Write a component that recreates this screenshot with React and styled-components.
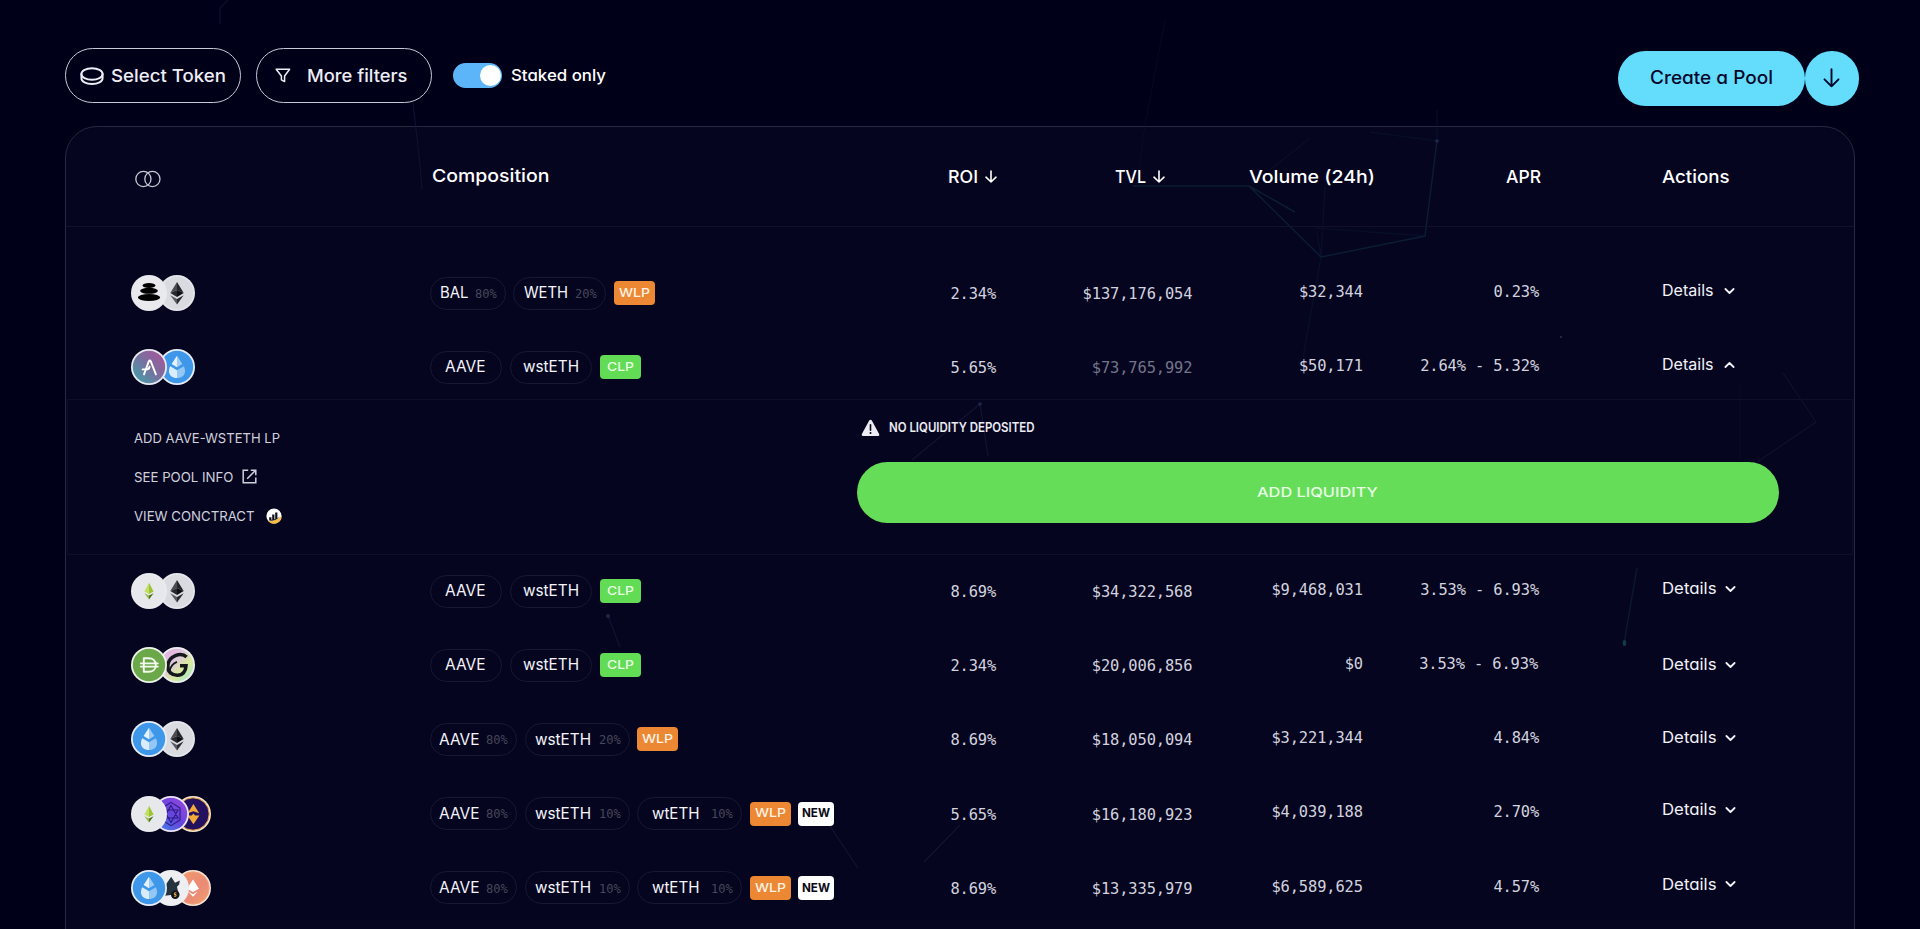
import React, { useLayoutEffect, useRef, useState } from "react";
import styled, { createGlobalStyle, css } from "styled-components";

const GlobalStyle = createGlobalStyle`
  *, *::before, *::after { box-sizing: border-box; }
  html, body { margin: 0; padding: 0; background: #010019; }
  body { overflow: hidden; }
  button { font: inherit; color: inherit; background: none; border: 0; padding: 0; cursor: pointer; }
`;

const sans = css`
  font-family: Inter, "Open Sans", sans-serif;
  font-feature-settings: "cv11" 1;
`;
const mono = css`
  font-family: "DejaVu Sans Mono", "Liberation Mono", monospace;
`;

/* ---------- text set to a fixed measure ---------- */

const Measure = styled.span`
  display: inline-block;
  flex: none;
  white-space: nowrap;
  text-align: left;
  width: ${(p) => p.$w}px;
  line-height: 1.2;
`;
const Ink = styled.span`
  display: inline-block;
  transform-origin: 0 50%;
`;

function Fit({ w, spaced, children }) {
  const ref = useRef(null);
  const [style, setStyle] = useState(undefined);
  useLayoutEffect(() => {
    const exact = ref.current.getBoundingClientRect().width;
    if (!exact) return;
    const count = Math.max(1, String(children).length - 1);
    setStyle(
      spaced
        ? { letterSpacing: `${((w - exact) / count).toFixed(3)}px` }
        : { transform: `scaleX(${(w / exact).toFixed(4)})` }
    );
  }, []);
  return (
    <Measure $w={w}>
      <Ink ref={ref} style={style}>{children}</Ink>
    </Measure>
  );
}

/* ---------- page ---------- */

const Page = styled.main`
  position: relative;
  width: 1920px;
  height: 929px;
  overflow: hidden;
  background: #010019;
  color: #fff;
  ${sans}
`;
const Network = styled.svg`
  position: absolute;
  inset: 0;
  z-index: 0;
  pointer-events: none;
`;
const Toolbar = styled.header`
  position: relative;
  z-index: 1;
  display: flex;
  align-items: flex-start;
  height: 126px;
  padding: 48px 61px 0 65px;
`;
const OutlineButton = styled.button`
  display: flex;
  align-items: center;
  width: 176px;
  height: 55px;
  margin-right: 15px;
  padding-left: ${(p) => p.$inset}px;
  gap: ${(p) => p.$gap}px;
  border: 1.5px solid #c9c8d6;
  border-radius: 28px;
  font-size: 17.5px;
  font-weight: 500;
  color: #eeeef6;
`;
const ToggleLabel = styled.label`
  display: flex;
  align-items: center;
  gap: 9px;
  height: 55px;
  margin-left: 6px;
  font-size: 16px;
  font-weight: 500;
`;
const Track = styled.span`
  display: flex;
  justify-content: flex-end;
  align-items: center;
  width: 49px;
  height: 25px;
  padding-right: 1.5px;
  border-radius: 13px;
  background: #5bb5f8;
`;
const Knob = styled.span`
  width: 21px;
  height: 21px;
  border-radius: 50%;
  background: #fff;
`;
const CreateGroup = styled.div`
  display: flex;
  margin: 3px 0 0 auto;
  color: #03062b;
`;
const CreateButton = styled.button`
  display: flex;
  align-items: center;
  justify-content: center;
  width: ${(p) => p.$w}px;
  height: 54.5px;
  border-radius: 28px;
  background: #64ddfd;
  font-size: 18px;
  font-weight: 500;
`;

/* ---------- table ---------- */

const Panel = styled.section`
  width: 1790px;
  height: 860px;
  margin-left: 65px;
  border: 1px solid #292741;
  border-radius: 32px;
  background: #05051f;
`;
const columns = css`
  display: grid;
  grid-template-columns: 299px 430px 137px 195.5px 170.5px 177px 122px 1fr;
  align-items: center;
`;
const HeadRow = styled.div`
  ${columns}
  position: relative;
  z-index: 1;
  height: 100px;
  padding-left: 65px;
  border-bottom: 1px solid #11112e;
  font-size: 17.8px;
  font-weight: 500;
`;
const HeadCell = styled.div`
  display: flex;
  align-items: center;
  justify-content: ${(p) => (p.$left ? "flex-start" : "flex-end")};
  gap: 7px;
  margin-right: ${(p) => p.$shift || 0}px;
`;
const PairSlot = styled.span`
  display: flex;
  padding: 4px 0 0 4px;
`;
const Raised = styled.span`
  display: flex;
  padding: 0 0 2px 1.5px;
`;
const Body = styled.div`
  position: relative;
  z-index: 1;
  padding-top: 29px;
`;
const Row = styled.div`
  ${columns}
  height: 74.2px;
  padding-left: 65px;
`;
const Coins = styled.div`
  display: flex;
`;
const Coin = styled.span`
  display: block;
  position: relative;
  z-index: ${(p) => 5 - p.$i};
  width: 36px;
  height: 36px;
  margin-left: ${(p) => (p.$i === 0 ? 0 : p.$tight ? -14.2 : -8.2)}px;
  svg { display: block; }
`;
const Chips = styled.div`
  display: flex;
  align-items: center;
  gap: 7.5px;
`;
const Chip = styled.span`
  display: flex;
  align-items: center;
  flex: none;
  width: ${(p) => p.$w}px;
  height: 33px;
  padding-left: ${(p) => p.$inset}px;
  border: 1px solid #191832;
  border-radius: 17px;
  font-size: 16.4px;
  color: #f4f4fa;
`;
const Weight = styled.span`
  ${mono}
  display: flex;
  margin-left: ${(p) => p.$gap}px;
  padding-top: 2px;
  font-size: 12px;
  color: #474759;
`;
const badgeTones = {
  WLP: { bg: "#ec8833", fg: "#fff3e6" },
  CLP: { bg: "#62db55", fg: "#e9ffe6" },
  NEW: { bg: "#ffffff", fg: "#0b0b16" },
};
const Badge = styled.span`
  display: flex;
  align-items: center;
  justify-content: center;
  flex: none;
  width: ${(p) => (p.$tone === "NEW" ? 36 : 41)}px;
  height: 24px;
  border-radius: 4px;
  background: ${(p) => badgeTones[p.$tone].bg};
  color: ${(p) => badgeTones[p.$tone].fg};
  font-size: 12px;
  font-weight: ${(p) => (p.$tone === "NEW" ? 700 : 500)};
`;
const Value = styled.div`
  ${mono}
  display: flex;
  justify-content: flex-end;
  padding-bottom: ${(p) => (p.$raised ? 2 : 0)}px;
  padding-top: ${(p) => (p.$raised ? 0 : 2.5)}px;
  padding-right: ${(p) => p.$right || 0}px;
  font-size: 15.4px;
  color: ${(p) => (p.$dim ? "#74748a" : "#d3d3df")};
`;
const Details = styled.button`
  display: flex;
  align-items: center;
  gap: ${(p) => (p.$plain ? 10.5 : 8)}px;
  grid-column: 8;
  padding-bottom: ${(p) => p.$lift * 2}px;
  font-size: ${(p) => (p.$plain ? 15.5 : 16)}px;
  color: #f2f2f8;
  ${(p) => p.$plain && css`font-feature-settings: "cv11" 0;`}
`;

/* ---------- expanded row ---------- */

const Expanded = styled.div`
  display: flex;
  width: 1786px;
  height: 156px;
  margin: -5.4px 0 -1px 1px;
  padding-left: 65.5px;
  border: 1px solid #0f0f2a;
`;
const Links = styled.div`
  display: flex;
  flex-direction: column;
  gap: 19px;
  width: 723px;
  padding-top: 28px;
  font-size: 13.6px;
  color: #d0d0dd;
`;
const LinkItem = styled.a`
  display: flex;
  align-items: center;
  gap: ${(p) => p.$gap || 0}px;
  height: 20px;
`;
const Deposit = styled.div`
  display: flex;
  flex-direction: column;
  width: 922.5px;
  padding-top: 18px;
`;
const Notice = styled.div`
  display: flex;
  align-items: center;
  gap: 9px;
  height: 20px;
  margin: 0 0 24px 4.5px;
  font-size: 12.8px;
  font-weight: 600;
  color: #ececf3;
`;
const AddButton = styled.button`
  display: flex;
  align-items: center;
  justify-content: center;
  height: 61px;
  padding-bottom: 1px;
  border-radius: 31px;
  background: #65dd59;
  font-size: 13.4px;
  font-weight: 500;
  color: #e9ffe6;
`;

/* ---------- glyphs ---------- */

const stroke = { fill: "none", stroke: "currentColor", strokeLinecap: "round", strokeLinejoin: "round" };

const CoinStackIcon = () => (
  <svg width="24" height="18" viewBox="0 0 24 18" {...stroke} strokeWidth="1.9">
    <ellipse cx="12" cy="7" rx="10.6" ry="5.8" />
    <path d="M1.4 7v4.2c0 3.2 4.7 5.8 10.6 5.8s10.6-2.6 10.6-5.8V7" />
  </svg>
);
const FilterIcon = () => (
  <svg width="16" height="15" viewBox="0 0 16 15" {...stroke} strokeWidth="1.5">
    <path d="M1.2 1.2h13.4L9.6 8v5.6l-3.2-1.8V8z" />
  </svg>
);
const BigArrow = () => (
  <svg width="17" height="20" viewBox="0 0 17 20" {...stroke} strokeWidth="1.9">
    <path d="M8.5 1.2v17M1.5 11.3l7 7 7-7" />
  </svg>
);
const SortArrow = () => (
  <svg width="12" height="13" viewBox="0 0 12 13" {...stroke} strokeWidth="1.6">
    <path d="M6 1v11M1 7.2 6 12l5-4.8" />
  </svg>
);
const PairIcon = () => (
  <svg width="26" height="18" viewBox="0 0 26 18" {...stroke} strokeWidth="1.3" color="#c8c8d4">
    <circle cx="8.4" cy="9" r="7.6" />
    <circle cx="17.4" cy="9" r="7.6" />
  </svg>
);
const Chevron = ({ up }) => (
  <svg width="11" height="8" viewBox="0 0 11 8" {...stroke} strokeWidth="1.8">
    <path d={up ? "M1.4 6 5.5 2l4.1 4" : "M1.4 2l4.1 4 4.1-4"} />
  </svg>
);
const ExternalIcon = () => (
  <svg width="15" height="15" viewBox="0 0 15 15" fill="none" stroke="currentColor" strokeWidth="1.5">
    <path d="M6.2 1.2H1.2v12.6h12.6V8.6M8.8 1.2h5v5M13.6 1.4 5.2 9.8" />
  </svg>
);
const ScanIcon = () => (
  <svg width="16" height="16" viewBox="0 0 16 16">
    <circle cx="8" cy="8" r="7.6" fill="#fff" />
    <path d="M1.6 12.6C6 13.8 12 11.8 15.6 8A7.6 7.6 0 0 1 2.4 13.3z" fill="#f5bd47" />
    <path d="M3.2 12.6V9.2h2.2v2.6h.8V6.4h2.2v4.8h.8V4.6h2.2v5.6l2.6-1.8C11.6 11.4 7 13.2 3.2 12.6z" fill="#10101c" />
  </svg>
);
const WarningIcon = () => (
  <svg width="19" height="18" viewBox="0 0 19 18">
    <path d="M9.5 2.2 16.8 15.6H2.2z" fill="currentColor" stroke="currentColor" strokeWidth="3" strokeLinejoin="round" />
    <path d="M9.5 5.8v5.4" stroke="#05051f" strokeWidth="1.6" strokeLinecap="round" />
    <circle cx="9.5" cy="13.9" r="1" fill="#05051f" />
  </svg>
);

/* ---------- token marks ---------- */

const Diamond = () => (
  <g>
    <path d="M18 7 11.3 18 18 14.9z" fill="#4a4a50" />
    <path d="M18 7l6.7 11-6.7-3.1z" fill="#25252b" />
    <path d="M11.3 18 18 14.9v7z" fill="#28282e" />
    <path d="M24.7 18 18 14.9v7z" fill="#0d0d14" />
    <path d="M11.3 20.2 18 24v5.5z" fill="#5a5a60" />
    <path d="M24.7 20.2 18 24v5.5z" fill="#2a2a30" />
  </g>
);
const Drop = () => (
  <g>
    <path d="M18 6.8 12.6 15 18 18.2z" fill="#e6f3ff" />
    <path d="M18 6.8 23.4 15 18 18.2z" fill="#9dcdf7" />
    <path d="M11.3 17.2 18 21.2v7.9c-4.6 0-8-3-8-6.9 0-1.9.5-3.6 1.3-5z" fill="#d9edff" />
    <path d="M24.7 17.2 18 21.2v7.9c4.6 0 8-3 8-6.9 0-1.9-.5-3.6-1.3-5z" fill="#92c7f6" />
  </g>
);

const tokens = {
  bal: { rim: "#e9e9ee", fill: "#e9e9ee", mark: (
    <g fill="#000"><ellipse cx="18" cy="10.4" rx="6.4" ry="2.5" /><ellipse cx="18" cy="15.8" rx="8.9" ry="3" /><ellipse cx="18" cy="22.5" rx="11.2" ry="3.5" /></g>
  ) },
  eth: { rim: "#e6e7ec", fill: "#d9dbe1", mark: <Diamond /> },
  aave: { rim: "#ebebf3", fill: "url(#aaveFill)", mark: (
    <g {...stroke} stroke="#fff" strokeWidth="1.9"><path d="M13 25.4 17.9 12.2q.9-1.4 1.8 0l5.2 13.2M11.6 20.4h4.6q1.9-.2 2.4-2.6" /></g>
  ) },
  lido: { rim: "#e8eefa", fill: "#3f97ea", mark: <Drop /> },
  lime: { rim: "#eaebf0", fill: "#e6e8ec", mark: (
    <g><path d="M18 9.8l-4.6 8.8L18 21z" fill="#c3df63" /><path d="M18 9.8l4.6 8.8L18 21z" fill="#9cc432" /><path d="M13.4 20.2 18 22.6v3.9z" fill="#9ab84a" /><path d="M22.6 20.2 18 22.6v3.9z" fill="#4c7020" /></g>
  ) },
  dai: { rim: "#f0f4ec", fill: "#6ba84a", mark: (
    <g {...stroke} stroke="#f4f8ee" strokeWidth="1.9"><path d="M12.8 11.2h4.8c4.2 0 7.2 2.6 7.2 6.8s-3 6.8-7.2 6.8h-4.8zM9.8 16.4h17M9.8 19.6h17" /></g>
  ) },
  gyd: { rim: "#eeeef0", fill: "url(#gydFill)", mark: (
    <g fill="none" stroke="#14181c" strokeWidth="3.6"><path d="M27.6 10C22 4.8 9.6 8.6 8.8 18.6c-.6 6.4 4.4 9.8 9.8 9.6 4.8 0 8.2-3.4 8.4-9.4h-6" /><path d="M10.4 25C11 20 14 16.4 18 14.8" strokeWidth="1.8" /></g>
  ) },
  violet: { rim: "#ece6fb", fill: "url(#violetFill)", mark: (
    <g fill="none" stroke="#2b1a86" strokeWidth="1.1"><path d="M18 6.4 27 12v12l-9 5.6L9 24V12zM18 9.4 25 22H11zM18 26.6 11 14h14z" /></g>
  ) },
  gold: { rim: "#f6e9d2", fill: "#23115f", ring: "#efa53d", mark: (
    <g fill="#f2aa3b"><path d="M18.4 8 24.2 17.2l-5.8-2-5.8 2z" /><path d="M18.4 28.2 12.4 19.4h4.4l1.6-1.8 1.6 1.8h4.4z" /></g>
  ) },
  wolf: { rim: "#eeeff2", fill: "#eeeff2", mark: (
    <g><path d="M18.2 6.8 22 12.8l4.8-2.2-.6 4-2.2 2.2 1 4.6-5 3.4-8.2 1 .8-3-2-1 2.6-1.4-1-5z" fill="#26333f" /><circle cx="22.2" cy="24.6" r="4.3" fill="#14161a" /><path d="M23.4 22.9h-2v1.6h1.6v1.7h-2" fill="none" stroke="#e6b24a" /></g>
  ) },
  coral: { rim: "#f8e6d8", fill: "url(#coralFill)", ring: "#f3a37c", mark: (
    <g fill="#fff"><path d="M18 9.6 24 18.8 18 22l-6-3.2z" /><path d="M13 21.4 18 24.2l5-2.8-5 5.4z" /></g>
  ) },
};

const TokenMark = ({ id }) => {
  const t = tokens[id];
  return (
    <svg width="36" height="36" viewBox="0 0 36 36">
      <circle cx="18" cy="18" r="18" fill={t.rim} />
      <circle cx="18" cy="18" r="16.2" fill={t.fill} stroke={t.ring || "none"} strokeWidth={t.ring ? 1 : 0} />
      {t.mark}
    </svg>
  );
};

const Gradients = () => (
  <defs>
    <linearGradient id="aaveFill" x1="1" y1="0" x2="0" y2="1"><stop offset="0" stopColor="#b0509a" /><stop offset=".5" stopColor="#77719f" /><stop offset="1" stopColor="#38a7ac" /></linearGradient>
    <linearGradient id="gydFill" x1="0" y1="0" x2="1" y2="1"><stop offset="0" stopColor="#e9a5e6" /><stop offset=".4" stopColor="#dcc8dc" /><stop offset=".65" stopColor="#d9eb9c" /><stop offset="1" stopColor="#9ce3d6" /></linearGradient>
    <linearGradient id="violetFill" x1="0" y1="1" x2="1" y2="0"><stop offset="0" stopColor="#3f8ae8" /><stop offset=".5" stopColor="#6645dd" /><stop offset="1" stopColor="#9b48dd" /></linearGradient>
    <linearGradient id="coralFill" x1="0" y1="0" x2="1" y2="1"><stop offset="0" stopColor="#f19a6c" /><stop offset=".6" stopColor="#eb8a76" /><stop offset="1" stopColor="#f0a06e" /></linearGradient>
  </defs>
);

/* ---------- data ---------- */

const plainPair = [
  { name: "AAVE", w: 72, inset: 14, tw: 40.5 },
  { name: "wstETH", w: 82.5, inset: 12, tw: 56 },
];
const triple = [
  { name: "AAVE", w: 87, inset: 7.5, tw: 40.5, share: "80%", gap: 7 },
  { name: "wstETH", w: 105, inset: 9, tw: 56, share: "10%", gap: 8 },
  { name: "wtETH", w: 105, inset: 13.5, tw: 47.5, share: "10%", gap: 12 },
];
const pools = [
  { coins: ["bal", "eth"], badges: ["WLP"], roi: "2.34%", tvl: "$137,176,054", vol: "$32,344", apr: "0.23%", lift: 1.8, plain: true,
    chips: [
      { name: "BAL", w: 75.5, inset: 8.5, tw: 28.5, share: "80%", gap: 6.5 },
      { name: "WETH", w: 93, inset: 9.5, tw: 44, share: "20%", gap: 7 },
    ] },
  { coins: ["aave", "lido"], badges: ["CLP"], chips: plainPair, roi: "5.65%", tvl: "$73,765,992", vol: "$50,171", apr: "2.64% - 5.32%", lift: 2, dim: true, open: true, plain: true },
  { coins: ["lime", "eth"], badges: ["CLP"], chips: plainPair, roi: "8.69%", tvl: "$34,322,568", vol: "$9,468,031", apr: "3.53% - 6.93%", lift: 2.3 },
  { coins: ["dai", "gyd"], badges: ["CLP"], chips: plainPair, roi: "2.34%", tvl: "$20,006,856", vol: "$0", apr: "3.53% - 6.93%", lift: 0.6, aprRight: 1.8 },
  { coins: ["lido", "eth"], badges: ["WLP"], roi: "8.69%", tvl: "$18,050,094", vol: "$3,221,344", apr: "4.84%", lift: 1.8,
    chips: [triple[0], { ...triple[1], share: "20%" }] },
  { coins: ["lime", "violet", "gold"], badges: ["WLP", "NEW"], chips: triple, roi: "5.65%", tvl: "$16,180,923", vol: "$4,039,188", apr: "2.70%", lift: 3.8 },
  { coins: ["lido", "wolf", "coral"], badges: ["WLP", "NEW"], chips: triple, roi: "8.69%", tvl: "$13,335,979", vol: "$6,589,625", apr: "4.57%", lift: 3.6 },
];

const Num = ({ children, ...rest }) => (
  <Value {...rest}><Fit spaced w={children.length * 9.16}>{children}</Fit></Value>
);

const PoolRow = ({ pool }) => (
  <Row>
    <Coins>
      {pool.coins.map((id, i) => (
        <Coin key={i} $i={i} $tight={pool.coins.length > 2}><TokenMark id={id} /></Coin>
      ))}
    </Coins>
    <Chips>
      {pool.chips.map((c, i) => (
        <Chip key={i} $w={c.w} $inset={c.inset}>
          <Fit w={c.tw}>{c.name}</Fit>
          {c.share && <Weight $gap={c.gap}><Fit w={21.8}>{c.share}</Fit></Weight>}
        </Chip>
      ))}
      {pool.badges.map((b) => (
        <Badge key={b} $tone={b}><Fit w={b === "WLP" ? 31 : b === "CLP" ? 27 : 28}>{b}</Fit></Badge>
      ))}
    </Chips>
    <Num $right={0.8}>{pool.roi}</Num>
    <Num $dim={pool.dim}>{pool.tvl}</Num>
    <Num $raised>{pool.vol}</Num>
    <Num $raised $right={pool.aprRight || 0.8}>{pool.apr}</Num>
    <Details $lift={pool.lift} $plain={pool.plain}>
      <Fit w={pool.plain ? 51.5 : 54.5}>Details</Fit>
      <Chevron up={pool.open} />
    </Details>
  </Row>
);

const PoolDetails = () => (
  <Expanded>
    <Links>
      <LinkItem><Fit w={146}>ADD AAVE-WSTETH LP</Fit></LinkItem>
      <LinkItem $gap={9}><Fit w={99.5}>SEE POOL INFO</Fit><ExternalIcon /></LinkItem>
      <LinkItem $gap={12}><Fit w={120.5}>VIEW CONCTRACT</Fit><ScanIcon /></LinkItem>
    </Links>
    <Deposit>
      <Notice><WarningIcon /><Fit w={145.5}>NO LIQUIDITY DEPOSITED</Fit></Notice>
      <AddButton><Fit w={121}>ADD LIQUIDITY</Fit></AddButton>
    </Deposit>
  </Expanded>
);

const BackgroundNetwork = () => (
  <Network width="1920" height="929" viewBox="0 0 1920 929" fill="none">
    <Gradients />
    <g stroke="#131334" strokeWidth="1.2">
      <path d="M228 0l-8 8v16M413 103l7 62 2 25" opacity=".8" />
      <path d="M1165 20l-20 105-7 50M1740 385v75" opacity=".35" />
      <path d="M1783 373l33 49-59 40" opacity=".8" />
      <path d="M912 460l68-56 8 52M608 616l12 31M830 826l28 42M960 825l-36 37" />
    </g>
    <g stroke="#0c1c34" strokeWidth="1.5">
      <path d="M1437 141l-12 95-104 21-72-71h-116M1249 186l46 26" />
      <path d="M1370 132l67 9v-31M1321 257l4-70M1321 257l-4-24M1425 236l-110-8M1270 170l40-32M1321 257l-18 100" opacity=".4" />
      <path d="M1624 643l13-75" opacity=".8" />
    </g>
    <g fill="#20284a">
      <circle cx="1437" cy="141" r="1.8" /><circle cx="1561" cy="337" r="1.2" /><circle cx="980" cy="404" r="1.8" /><circle cx="608" cy="616" r="2" />
    </g>
    <ellipse cx="1624.5" cy="643" rx="1.8" ry="3" fill="#123a48" />
  </Network>
);

export default function App() {
  return (
    <>
      <GlobalStyle />
      <Page>
        <BackgroundLayered />
      </Page>
    </>
  );
}

const BackgroundLayered = () => (
  <>
    <Toolbar>
      <OutlineButton $inset={14} $gap={7}><CoinStackIcon /><Fit w={115}>Select Token</Fit></OutlineButton>
      <OutlineButton $inset={17.5} $gap={16}><FilterIcon /><Fit w={100.5}>More filters</Fit></OutlineButton>
      <ToggleLabel><Track><Knob /></Track><Fit w={95}>Staked only</Fit></ToggleLabel>
      <CreateGroup>
        <CreateButton $w={186.5}><Fit w={123}>Create a Pool</Fit></CreateButton>
        <CreateButton $w={54.5} aria-label="Show more"><BigArrow /></CreateButton>
      </CreateGroup>
    </Toolbar>
    <Panel>
      <HeadRow>
        <HeadCell $left><PairSlot><PairIcon /></PairSlot></HeadCell>
        <HeadCell $left><Raised><Fit w={117.5}>Composition</Fit></Raised></HeadCell>
        <HeadCell><Fit w={30}>ROI</Fit><SortArrow /></HeadCell>
        <HeadCell $shift={28}><Fit w={31}>TVL</Fit><SortArrow /></HeadCell>
        <HeadCell $shift={-12}><Fit w={126}>Volume (24h)</Fit></HeadCell>
        <HeadCell $shift={-1}><Fit w={35}>APR</Fit></HeadCell>
        <span />
        <HeadCell $left><Fit w={67.5}>Actions</Fit></HeadCell>
      </HeadRow>
      <Body>
        {pools.map((pool, i) => (
          <React.Fragment key={i}>
            <PoolRow pool={pool} />
            {pool.open && <PoolDetails />}
          </React.Fragment>
        ))}
      </Body>
    </Panel>
    <BackgroundNetwork />
  </>
);
